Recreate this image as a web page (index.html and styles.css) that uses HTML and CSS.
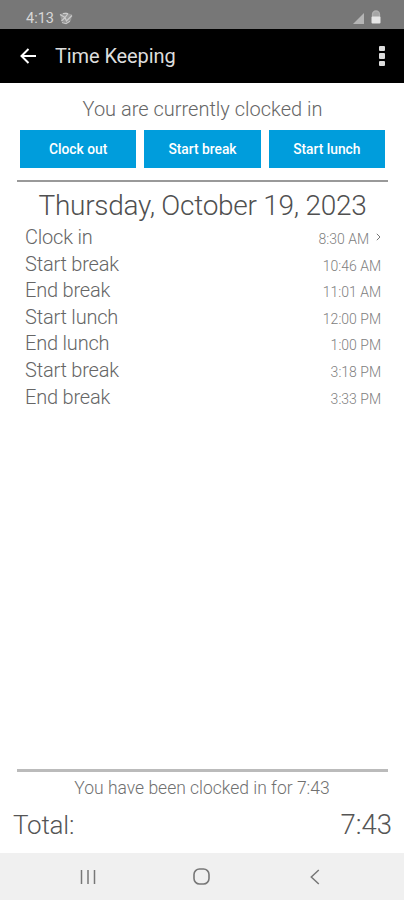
FILE: index.html
```html
<!DOCTYPE html>
<html lang="en">
<head>
<meta charset="utf-8">
<title>Time Keeping</title>
<link rel="stylesheet" href="styles.css">
</head>
<body>
<div class="status">
  <div class="status-left"><span class="clock">4:13</span>
    <svg class="badge-icon" width="14" height="14" viewBox="0 0 14 14"><path d="M1 3.500 4 2l3-1 2.500 1.500L13 3.500 12 9.500 7 13 2.500 10Z" fill="#999"/><path d="M1 3.500 6 6.500 9 2.500M2.500 10 6 6.500 7.500 10 13 4.500M4 2.500h5M3 11.500l4 1.200 4-2.500" fill="none" stroke="#ccc" stroke-width="1.200"/></svg>
  </div>
  <div class="status-right">
    <svg width="11" height="11" viewBox="0 0 11 11"><path d="M0 11 11 0V11Z" fill="#b5b5b5"/></svg>
    <svg width="10" height="14" viewBox="0 0 10 14"><path d="M1.500 7V4.500a3.500 3.500 0 0 1 7 0V7" fill="#a5a5a5" stroke="#b0b0b0" stroke-width="1.300"/><rect x="0.500" y="6.500" width="9" height="7" rx="1" fill="#e6e6e6"/></svg>
  </div>
</div>
<header class="appbar">
  <svg width="16" height="16" viewBox="0 0 16 16" fill="none" stroke="#fff" stroke-width="2"><path d="M8.500 1 1.500 8l7 7M1.500 8H16"/></svg>
  <h1 class="title">Time Keeping</h1>
  <div class="more"><i></i><i></i><i></i></div>
</header>
<main class="content">
  <p class="state">You are currently clocked in</p>
  <div class="actions"><button>Clock out</button><button>Start break</button><button>Start lunch</button></div>
  <div class="rule"></div>
  <h2 class="date">Thursday, October 19, 2023</h2>
  <ul class="log">
    <li><span>Clock in</span><time>8:30 AM<svg class="chev" width="5" height="8" viewBox="0 0 5 8" fill="none" stroke="#777" stroke-width="1"><path d="M.8.8 4 4 .8 7.200"/></svg></time></li>
    <li><span>Start break</span><time>10:46 AM</time></li>
    <li><span>End break</span><time>11:01 AM</time></li>
    <li><span>Start lunch</span><time>12:00 PM</time></li>
    <li><span>End lunch</span><time>1:00 PM</time></li>
    <li><span>Start break</span><time>3:18 PM</time></li>
    <li><span>End break</span><time>3:33 PM</time></li>
  </ul>
</main>
<footer class="summary">
  <div class="rule thick"></div>
  <p class="elapsed">You have been clocked in for 7:43</p>
  <div class="total"><span class="total-label">Total:</span><span class="total-value">7:43</span></div>
</footer>
<nav class="nav">
  <svg width="16" height="16" viewBox="0 0 16 16" stroke="#777" stroke-width="1.500"><path d="M1.500 1V15M8 1V15M14.500 1V15"/></svg>
  <svg class="home" width="17" height="17" viewBox="0 0 17 17" fill="none" stroke="#777" stroke-width="1.600"><rect x="1" y="1" width="15" height="15" rx="5.500"/></svg>
  <svg width="10" height="16" viewBox="0 0 10 16" fill="none" stroke="#777" stroke-width="1.500"><path d="M8.800 1 1.300 8l7.500 7"/></svg>
</nav>
</body>
</html>
```
FILE: styles.css
```css
* { box-sizing: border-box; }
body { margin: 0; width: 404px; height: 900px; display: flex; flex-direction: column; background: #fff; font-family: Roboto, sans-serif; font-weight: 300; color: #666; overflow: hidden; }
h1, h2, p, ul { margin: 0; padding: 0; font-weight: 300; white-space: nowrap; }
svg { display: block; flex: none; }
.status { height: 29px; flex: none; background: #777; display: flex; justify-content: space-between; padding: 7px 23px 0 26px; }
.status-left { display: flex; height: 22px; gap: 5px; }
.clock { font-size: 14.500px; line-height: 23px; font-weight: 400; color: #d8d8d8; }
.badge-icon { margin-top: 4px; }
.status-right { display: flex; align-items: flex-end; height: 17px; gap: 7px; }
.appbar { height: 54px; flex: none; background: #000; display: flex; align-items: center; padding: 0 19px 0 20px; }
.title { font-size: 20px; line-height: 54px; font-weight: 400; color: #ddd; margin-left: 19px; letter-spacing: -0.1px; }
.more { margin-left: auto; display: flex; flex-direction: column; gap: 2px; }
.more i { width: 6px; height: 5.500px; background: #ddd; border-radius: 1px; }
.content { flex: 1; padding: 14px 16px 0 17px; }
.state { font-size: 20px; line-height: 24px; text-align: center; }
.actions { display: flex; gap: 8px; margin: 9px 3px 0; }
.actions button { flex: 1; height: 38px; border: 0; padding: 0; background: #009ddc; color: #fff; font: 500 13.800px/38px Roboto, sans-serif; }
.rule { height: 2px; margin-top: 12px; background: #999; }
.date { font-size: 28px; line-height: 34px; margin-top: 7px; text-align: center; letter-spacing: -0.27px; color: #505050; }
.log { list-style: none; padding: 0 7px 0 8px; margin-top: 1px; }
.log li { display: flex; justify-content: space-between; height: 26.600px; line-height: 26.600px; font-size: 20px; letter-spacing: -0.2px; }
.log time { font-size: 14px; line-height: 30px; letter-spacing: 0; color: #808080; display: flex; }
.chev { margin: 9px 0 0 7px; }
.summary { height: 84px; flex: none; }
.thick { height: 3px; margin: 0 16px 0 17px; background: #bbb; }
.elapsed { font-size: 17.500px; line-height: 20px; margin-top: 6px; text-align: center; color: #707070; }
.total { display: flex; justify-content: space-between; align-items: baseline; padding: 0 12px 0 13px; margin-top: 9px; line-height: 36px; color: #555; }
.total-label { font-size: 26px; letter-spacing: -0.2px; }
.total-value { font-size: 27.500px; }
.nav { height: 47px; flex: none; background: #f0f0f0; display: flex; align-items: center; padding: 0 84px 0 80px; justify-content: space-between; }
.home { margin-right: 3px; }
```
